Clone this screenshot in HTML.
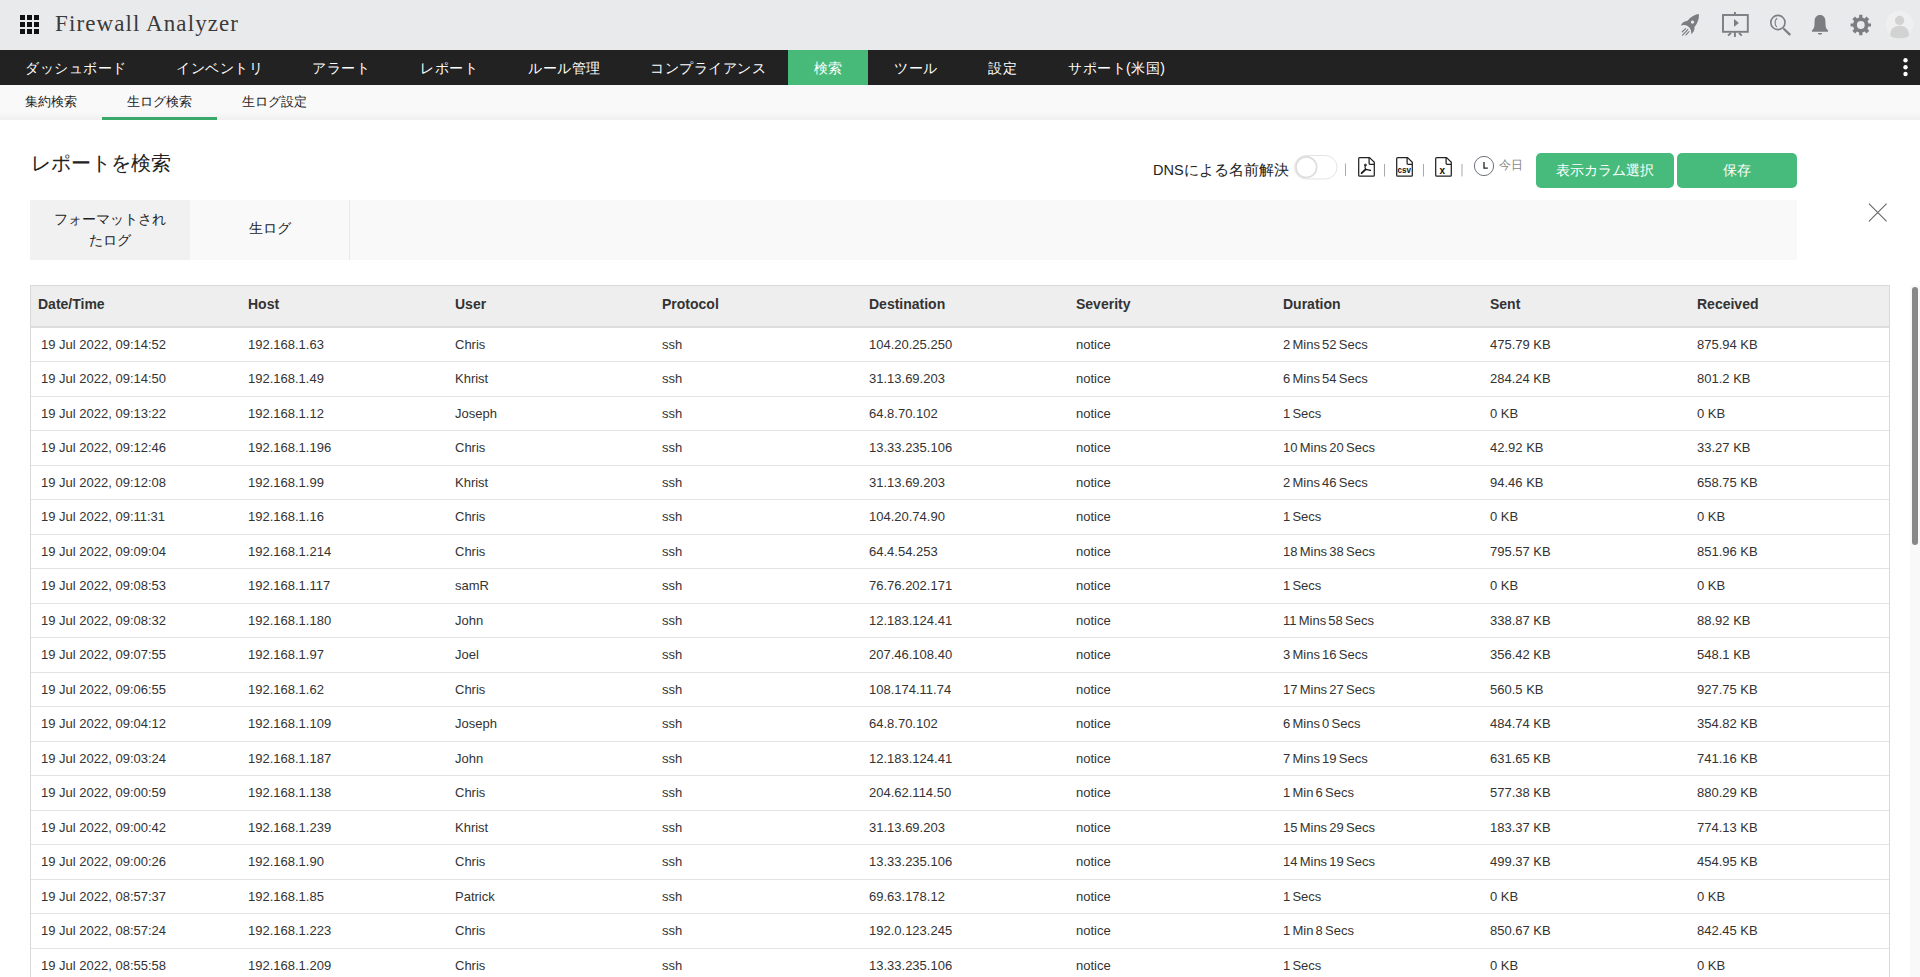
<!DOCTYPE html>
<html><head><meta charset="utf-8">
<style>
*{box-sizing:border-box;margin:0;padding:0}
html,body{width:1920px;height:977px;overflow:hidden;background:#fff;font-family:"Liberation Sans",sans-serif;color:#222}
.hdr{position:absolute;left:0;top:0;width:1920px;height:50px;background:#e9eaec}
.grid{position:absolute;left:20px;top:15px;width:19px;height:19px}
.grid i{position:absolute;width:5px;height:5px;background:#111}
.brand{position:absolute;left:55px;top:10px;font-family:"Liberation Serif",serif;font-size:23px;color:#3a3a3a;letter-spacing:1.1px;line-height:27px}
.nav{position:absolute;left:0;top:50px;width:1920px;height:35px;background:#222}
.nav span{position:absolute;top:0;height:35px;line-height:37px;overflow:hidden;color:#fff;font-size:14px;letter-spacing:0.5px;white-space:nowrap}
.nav .act{background:#47ba7a;text-align:center}
.sub{position:absolute;left:0;top:85px;width:1920px;height:35px;background:linear-gradient(to bottom,#f9f9f9 0,#f9f9f9 27px,#f0f0f0 35px)}
.sub span{position:absolute;top:0;height:35px;line-height:33px;font-size:13px;color:#222;white-space:nowrap}
.sub .uline{position:absolute;left:102px;top:32px;width:115px;height:3px;background:#3aa86b}
.title{position:absolute;left:31px;top:150px;font-size:20px;color:#222;white-space:nowrap}
.tabs{position:absolute;left:30px;top:200px;width:1767px;height:60px;background:#f9f9f9}
.tab{position:absolute;top:0;height:60px;width:160px;text-align:center;font-size:14px;color:#222;display:flex;align-items:center;justify-content:center;line-height:21px}
.close{position:absolute;left:1867px;top:202px;width:21px;height:21px}
.scroll{position:absolute;left:1910px;top:285px;width:10px;height:692px;background:#f9f9f9}
.thumb{position:absolute;left:1912px;top:287px;width:6px;height:258px;background:#888;border-radius:3px}
.tb{position:absolute}
.th{position:absolute;top:286px;height:40px;line-height:40px;font-size:14px;font-weight:bold;color:#333;white-space:nowrap;margin-top:-2px}
.td{position:absolute;height:33px;line-height:33px;font-size:13px;color:#333;white-space:nowrap;margin-top:0}
.rl{position:absolute;left:31px;width:1858px;height:1px;background:#e3e3e3}
.btn{position:absolute;top:153px;height:35px;line-height:35px;background:#47bb7c;color:#fff;border-radius:5px;font-size:14px;text-align:center;white-space:nowrap}
</style></head><body>
<div class="hdr">
  <div class="grid"><i style="left:0;top:0"></i><i style="left:7px;top:0"></i><i style="left:14px;top:0"></i><i style="left:0;top:7px"></i><i style="left:7px;top:7px"></i><i style="left:14px;top:7px"></i><i style="left:0;top:14px"></i><i style="left:7px;top:14px"></i><i style="left:14px;top:14px"></i></div>
  <div class="brand">Firewall Analyzer</div>
</div>
<div class="nav">
  <span style="left:25px">ダッシュボード</span>
  <span style="left:176px">インベントリ</span>
  <span style="left:312px">アラート</span>
  <span style="left:420px">レポート</span>
  <span style="left:528px">ルール管理</span>
  <span style="left:650px">コンプライアンス</span>
  <span class="act" style="left:788px;width:80px">検索</span>
  <span style="left:894px">ツール</span>
  <span style="left:988px">設定</span>
  <span style="left:1068px">サポート(米国)</span>
</div>
<div class="sub">
  <span style="left:25px">集約検索</span>
  <span style="left:127px">生ログ検索</span>
  <span style="left:242px">生ログ設定</span>
  <div class="uline"></div>
</div>
<div class="title">レポートを検索</div>
<div class="tabs">
  <div class="tab" style="left:0;background:#f1f1f1">フォーマットされ<br>たログ</div>
  <div class="tab" style="left:160px;border-right:1px solid #e8e8e8;padding-bottom:4px">生ログ</div>
</div>
<svg style="position:absolute;left:0;top:0" width="1920" height="260" viewBox="0 0 1920 260">
<g fill="#7a7e81">
<path d="M1698.8 13.9C1695.5 14.2 1690.5 16.5 1687.5 20.8C1685 21 1682 22.5 1680.8 25.6C1683.5 24.6 1686.5 25 1688.8 27C1690.8 29 1691.5 31.5 1691.3 34.3C1693.8 32 1695 29.5 1694.4 27C1697.5 23.5 1699.5 18 1698.8 13.9Z"/>
<circle cx="1692.5" cy="22.1" r="1.7" fill="#e9eaec"/>
</g>
<g stroke="#7a7e81" stroke-width="1.2" stroke-linecap="round" fill="none">
<path d="M1685.6 28.6L1682.3 31.8M1687.8 29.6L1682.6 35.2M1689 31.7L1685.9 34.8"/>
</g>
<g stroke="#7a7e81" fill="none" stroke-width="1.9">
<rect x="1723" y="15" width="24.8" height="16.8"/>
<path d="M1734.9 12V15M1734.9 32V36.9M1731 33L1728 35.6M1739 33L1741.8 35.6"/>
</g>
<path d="M1734 19.1L1734 26.8L1738.9 22.9Z" fill="#7a7e81"/>
<g stroke="#7a7e81" fill="none">
<circle cx="1777.9" cy="22.5" r="7.1" stroke-width="1.6"/>
<path d="M1784 29L1789.6 34.4" stroke-width="2.2" stroke-linecap="round"/>
<path d="M1777.2 18.2C1774.6 19.8 1774.3 24.6 1776.8 27.2" stroke-width="1.1"/>
</g>
<path fill="#7a7e81" d="M1820 15C1823.3 15 1825.3 17.5 1825.4 21L1825.6 25.8C1825.8 28 1826.8 29.5 1828 30.3V31.8H1812V30.3C1813.2 29.5 1814.2 28 1814.4 25.8L1814.6 21C1814.7 17.5 1816.7 15 1820 15ZM1817.8 33.1A2.2 1.6 0 0 0 1822.2 33.1Z"/>
<g transform="translate(1860.8 25)" fill="#7a7e81">
<path d="M-1.6 -10.2H1.6V-7.6A7.6 7.6 0 0 1 3.9 -6.6L5.7 -8.5L8.5 -5.7L6.6 -3.9A7.6 7.6 0 0 1 7.6 -1.6H10.2V1.6H7.6A7.6 7.6 0 0 1 6.6 3.9L8.5 5.7L5.7 8.5L3.9 6.6A7.6 7.6 0 0 1 1.6 7.6V10.2H-1.6V7.6A7.6 7.6 0 0 1 -3.9 6.6L-5.7 8.5L-8.5 5.7L-6.6 3.9A7.6 7.6 0 0 1 -7.6 1.6H-10.2V-1.6H-7.6A7.6 7.6 0 0 1 -6.6 -3.9L-8.5 -5.7L-5.7 -8.5L-3.9 -6.6A7.6 7.6 0 0 1 -1.6 -7.6ZM0 -3.9A3.9 3.9 0 1 0 0 3.9A3.9 3.9 0 1 0 0 -3.9Z" fill-rule="evenodd"/>
</g>
<circle cx="1899.6" cy="24.6" r="13.8" fill="#efefef"/>
<circle cx="1899.6" cy="20.4" r="4.6" fill="#d2d2d2"/>
<path d="M1890.2 34.5C1890.2 29 1894.5 25.8 1899.6 25.8C1904.7 25.8 1909 29 1909 34.5C1909 37 1905 38.3 1899.6 38.3C1894.2 38.3 1890.2 37 1890.2 34.5Z" fill="#d2d2d2"/>
<g fill="#fff"><circle cx="1905.5" cy="60.2" r="2.2"/><circle cx="1905.5" cy="67.2" r="2.2"/><circle cx="1905.5" cy="74" r="2.2"/></g>
<g stroke="#222" stroke-width="1.25" fill="none" stroke-linejoin="round">
<path d="M1358.7 158.6Q1358.7 157.6 1359.7 157.6L1369.6 157.6L1374.3 162.3L1374.3 175.2Q1374.3 176.2 1373.3 176.2L1359.7 176.2Q1358.7 176.2 1358.7 175.2Z"/>
<path d="M1369.1 157.6V163.3Q1369.1 164.3 1370.1 164.3H1374.3"/>
<path d="M1396.7 158.6Q1396.7 157.6 1397.7 157.6L1407.6 157.6L1412.3 162.3L1412.3 175.2Q1412.3 176.2 1411.3 176.2L1397.7 176.2Q1396.7 176.2 1396.7 175.2Z"/>
<path d="M1407.1 157.6V163.3Q1407.1 164.3 1408.1 164.3H1412.3"/>
<path d="M1435.7 158.6Q1435.7 157.6 1436.7 157.6L1446.6 157.6L1451.3 162.3L1451.3 175.2Q1451.3 176.2 1450.3 176.2L1436.7 176.2Q1435.7 176.2 1435.7 175.2Z"/>
<path d="M1446.1 157.6V163.3Q1446.1 164.3 1447.1 164.3H1451.3"/>
</g>
<g stroke="#111" fill="none" stroke-linecap="round">
<path d="M1365.3 165.5C1364.6 167 1365.2 168.5 1365.6 169.4" stroke-width="1.1"/>
<circle cx="1365.3" cy="165" r="0.9" stroke-width="0.9"/>
<path d="M1365.6 169.4L1361.6 173.2" stroke-width="1.8"/>
<path d="M1365.6 169.4L1370.5 170.4" stroke-width="1.3"/>
</g>
<text x="1397.6" y="173.2" font-family="Liberation Sans" font-weight="bold" font-size="9.5" fill="#111" textLength="13.4" lengthAdjust="spacingAndGlyphs">csv</text>
<text x="1439.6" y="173.7" font-family="Liberation Sans" font-weight="bold" font-size="10" fill="#111">x</text>
<g fill="#aaa"><rect x="1345" y="163.5" width="1" height="12.5"/><rect x="1384" y="164" width="1" height="12.5"/><rect x="1423" y="164" width="1" height="12.5"/><rect x="1461.5" y="164" width="1" height="12.5"/></g>
<circle cx="1484" cy="166" r="9.6" stroke="#6c737a" stroke-width="1" fill="none"/>
<path d="M1484 162V168.2H1487.8" stroke="#222" stroke-width="1.3" fill="none"/>
<rect x="1294.5" y="155.5" width="42.5" height="23.5" rx="11.75" fill="#fff" stroke="#e3e3e3"/>
<circle cx="1306.3" cy="167.2" r="10.3" fill="#fff" stroke="#dcdcdc" stroke-width="1.6"/>
<path d="M1868.9 203.6L1886.6 221.3M1886.6 203.6L1868.9 221.3" stroke="#666" stroke-width="1.1" fill="none"/>
</svg>
<div style="position:absolute;left:1153px;top:160px;font-size:14.5px;color:#222;white-space:nowrap;line-height:20px">DNSによる名前解決</div>
<div style="position:absolute;left:1499px;top:157px;font-size:12px;color:#888;white-space:nowrap;line-height:16px">今日</div>
<div class="btn" style="left:1536px;width:138px">表示カラム選択</div>
<div class="btn" style="left:1677px;width:120px">保存</div>

<div class="tb" style="left:30px;top:285px;width:1860px;height:692px;border:1px solid #d9d9d9;border-bottom:none"></div>
<div style="position:absolute;left:31px;top:286px;width:1858px;height:40px;background:#eee"></div>
<div style="position:absolute;left:31px;top:326px;width:1858px;height:2px;background:#ddd"></div>
<div class="th" style="left:38px">Date/Time</div>
<div class="th" style="left:248px">Host</div>
<div class="th" style="left:455px">User</div>
<div class="th" style="left:662px">Protocol</div>
<div class="th" style="left:869px">Destination</div>
<div class="th" style="left:1076px">Severity</div>
<div class="th" style="left:1283px">Duration</div>
<div class="th" style="left:1490px">Sent</div>
<div class="th" style="left:1697px">Received</div>
<div class="rl" style="top:361px"></div>
<div class="td" style="left:41px;top:328px">19 Jul 2022, 09:14:52</div>
<div class="td" style="left:248px;top:328px">192.168.1.63</div>
<div class="td" style="left:455px;top:328px">Chris</div>
<div class="td" style="left:662px;top:328px">ssh</div>
<div class="td" style="left:869px;top:328px">104.20.25.250</div>
<div class="td" style="left:1076px;top:328px">notice</div>
<div class="td" style="word-spacing:-1.4px;left:1283px;top:328px">2 Mins 52 Secs</div>
<div class="td" style="left:1490px;top:328px">475.79 KB</div>
<div class="td" style="left:1697px;top:328px">875.94 KB</div>
<div class="rl" style="top:396px"></div>
<div class="td" style="left:41px;top:362px">19 Jul 2022, 09:14:50</div>
<div class="td" style="left:248px;top:362px">192.168.1.49</div>
<div class="td" style="left:455px;top:362px">Khrist</div>
<div class="td" style="left:662px;top:362px">ssh</div>
<div class="td" style="left:869px;top:362px">31.13.69.203</div>
<div class="td" style="left:1076px;top:362px">notice</div>
<div class="td" style="word-spacing:-1.4px;left:1283px;top:362px">6 Mins 54 Secs</div>
<div class="td" style="left:1490px;top:362px">284.24 KB</div>
<div class="td" style="left:1697px;top:362px">801.2 KB</div>
<div class="rl" style="top:430px"></div>
<div class="td" style="left:41px;top:397px">19 Jul 2022, 09:13:22</div>
<div class="td" style="left:248px;top:397px">192.168.1.12</div>
<div class="td" style="left:455px;top:397px">Joseph</div>
<div class="td" style="left:662px;top:397px">ssh</div>
<div class="td" style="left:869px;top:397px">64.8.70.102</div>
<div class="td" style="left:1076px;top:397px">notice</div>
<div class="td" style="word-spacing:-1.4px;left:1283px;top:397px">1 Secs</div>
<div class="td" style="left:1490px;top:397px">0 KB</div>
<div class="td" style="left:1697px;top:397px">0 KB</div>
<div class="rl" style="top:465px"></div>
<div class="td" style="left:41px;top:431px">19 Jul 2022, 09:12:46</div>
<div class="td" style="left:248px;top:431px">192.168.1.196</div>
<div class="td" style="left:455px;top:431px">Chris</div>
<div class="td" style="left:662px;top:431px">ssh</div>
<div class="td" style="left:869px;top:431px">13.33.235.106</div>
<div class="td" style="left:1076px;top:431px">notice</div>
<div class="td" style="word-spacing:-1.4px;left:1283px;top:431px">10 Mins 20 Secs</div>
<div class="td" style="left:1490px;top:431px">42.92 KB</div>
<div class="td" style="left:1697px;top:431px">33.27 KB</div>
<div class="rl" style="top:499px"></div>
<div class="td" style="left:41px;top:466px">19 Jul 2022, 09:12:08</div>
<div class="td" style="left:248px;top:466px">192.168.1.99</div>
<div class="td" style="left:455px;top:466px">Khrist</div>
<div class="td" style="left:662px;top:466px">ssh</div>
<div class="td" style="left:869px;top:466px">31.13.69.203</div>
<div class="td" style="left:1076px;top:466px">notice</div>
<div class="td" style="word-spacing:-1.4px;left:1283px;top:466px">2 Mins 46 Secs</div>
<div class="td" style="left:1490px;top:466px">94.46 KB</div>
<div class="td" style="left:1697px;top:466px">658.75 KB</div>
<div class="rl" style="top:534px"></div>
<div class="td" style="left:41px;top:500px">19 Jul 2022, 09:11:31</div>
<div class="td" style="left:248px;top:500px">192.168.1.16</div>
<div class="td" style="left:455px;top:500px">Chris</div>
<div class="td" style="left:662px;top:500px">ssh</div>
<div class="td" style="left:869px;top:500px">104.20.74.90</div>
<div class="td" style="left:1076px;top:500px">notice</div>
<div class="td" style="word-spacing:-1.4px;left:1283px;top:500px">1 Secs</div>
<div class="td" style="left:1490px;top:500px">0 KB</div>
<div class="td" style="left:1697px;top:500px">0 KB</div>
<div class="rl" style="top:568px"></div>
<div class="td" style="left:41px;top:535px">19 Jul 2022, 09:09:04</div>
<div class="td" style="left:248px;top:535px">192.168.1.214</div>
<div class="td" style="left:455px;top:535px">Chris</div>
<div class="td" style="left:662px;top:535px">ssh</div>
<div class="td" style="left:869px;top:535px">64.4.54.253</div>
<div class="td" style="left:1076px;top:535px">notice</div>
<div class="td" style="word-spacing:-1.4px;left:1283px;top:535px">18 Mins 38 Secs</div>
<div class="td" style="left:1490px;top:535px">795.57 KB</div>
<div class="td" style="left:1697px;top:535px">851.96 KB</div>
<div class="rl" style="top:603px"></div>
<div class="td" style="left:41px;top:569px">19 Jul 2022, 09:08:53</div>
<div class="td" style="left:248px;top:569px">192.168.1.117</div>
<div class="td" style="left:455px;top:569px">samR</div>
<div class="td" style="left:662px;top:569px">ssh</div>
<div class="td" style="left:869px;top:569px">76.76.202.171</div>
<div class="td" style="left:1076px;top:569px">notice</div>
<div class="td" style="word-spacing:-1.4px;left:1283px;top:569px">1 Secs</div>
<div class="td" style="left:1490px;top:569px">0 KB</div>
<div class="td" style="left:1697px;top:569px">0 KB</div>
<div class="rl" style="top:637px"></div>
<div class="td" style="left:41px;top:604px">19 Jul 2022, 09:08:32</div>
<div class="td" style="left:248px;top:604px">192.168.1.180</div>
<div class="td" style="left:455px;top:604px">John</div>
<div class="td" style="left:662px;top:604px">ssh</div>
<div class="td" style="left:869px;top:604px">12.183.124.41</div>
<div class="td" style="left:1076px;top:604px">notice</div>
<div class="td" style="word-spacing:-1.4px;left:1283px;top:604px">11 Mins 58 Secs</div>
<div class="td" style="left:1490px;top:604px">338.87 KB</div>
<div class="td" style="left:1697px;top:604px">88.92 KB</div>
<div class="rl" style="top:672px"></div>
<div class="td" style="left:41px;top:638px">19 Jul 2022, 09:07:55</div>
<div class="td" style="left:248px;top:638px">192.168.1.97</div>
<div class="td" style="left:455px;top:638px">Joel</div>
<div class="td" style="left:662px;top:638px">ssh</div>
<div class="td" style="left:869px;top:638px">207.46.108.40</div>
<div class="td" style="left:1076px;top:638px">notice</div>
<div class="td" style="word-spacing:-1.4px;left:1283px;top:638px">3 Mins 16 Secs</div>
<div class="td" style="left:1490px;top:638px">356.42 KB</div>
<div class="td" style="left:1697px;top:638px">548.1 KB</div>
<div class="rl" style="top:706px"></div>
<div class="td" style="left:41px;top:673px">19 Jul 2022, 09:06:55</div>
<div class="td" style="left:248px;top:673px">192.168.1.62</div>
<div class="td" style="left:455px;top:673px">Chris</div>
<div class="td" style="left:662px;top:673px">ssh</div>
<div class="td" style="left:869px;top:673px">108.174.11.74</div>
<div class="td" style="left:1076px;top:673px">notice</div>
<div class="td" style="word-spacing:-1.4px;left:1283px;top:673px">17 Mins 27 Secs</div>
<div class="td" style="left:1490px;top:673px">560.5 KB</div>
<div class="td" style="left:1697px;top:673px">927.75 KB</div>
<div class="rl" style="top:741px"></div>
<div class="td" style="left:41px;top:707px">19 Jul 2022, 09:04:12</div>
<div class="td" style="left:248px;top:707px">192.168.1.109</div>
<div class="td" style="left:455px;top:707px">Joseph</div>
<div class="td" style="left:662px;top:707px">ssh</div>
<div class="td" style="left:869px;top:707px">64.8.70.102</div>
<div class="td" style="left:1076px;top:707px">notice</div>
<div class="td" style="word-spacing:-1.4px;left:1283px;top:707px">6 Mins 0 Secs</div>
<div class="td" style="left:1490px;top:707px">484.74 KB</div>
<div class="td" style="left:1697px;top:707px">354.82 KB</div>
<div class="rl" style="top:775px"></div>
<div class="td" style="left:41px;top:742px">19 Jul 2022, 09:03:24</div>
<div class="td" style="left:248px;top:742px">192.168.1.187</div>
<div class="td" style="left:455px;top:742px">John</div>
<div class="td" style="left:662px;top:742px">ssh</div>
<div class="td" style="left:869px;top:742px">12.183.124.41</div>
<div class="td" style="left:1076px;top:742px">notice</div>
<div class="td" style="word-spacing:-1.4px;left:1283px;top:742px">7 Mins 19 Secs</div>
<div class="td" style="left:1490px;top:742px">631.65 KB</div>
<div class="td" style="left:1697px;top:742px">741.16 KB</div>
<div class="rl" style="top:810px"></div>
<div class="td" style="left:41px;top:776px">19 Jul 2022, 09:00:59</div>
<div class="td" style="left:248px;top:776px">192.168.1.138</div>
<div class="td" style="left:455px;top:776px">Chris</div>
<div class="td" style="left:662px;top:776px">ssh</div>
<div class="td" style="left:869px;top:776px">204.62.114.50</div>
<div class="td" style="left:1076px;top:776px">notice</div>
<div class="td" style="word-spacing:-1.4px;left:1283px;top:776px">1 Min 6 Secs</div>
<div class="td" style="left:1490px;top:776px">577.38 KB</div>
<div class="td" style="left:1697px;top:776px">880.29 KB</div>
<div class="rl" style="top:844px"></div>
<div class="td" style="left:41px;top:811px">19 Jul 2022, 09:00:42</div>
<div class="td" style="left:248px;top:811px">192.168.1.239</div>
<div class="td" style="left:455px;top:811px">Khrist</div>
<div class="td" style="left:662px;top:811px">ssh</div>
<div class="td" style="left:869px;top:811px">31.13.69.203</div>
<div class="td" style="left:1076px;top:811px">notice</div>
<div class="td" style="word-spacing:-1.4px;left:1283px;top:811px">15 Mins 29 Secs</div>
<div class="td" style="left:1490px;top:811px">183.37 KB</div>
<div class="td" style="left:1697px;top:811px">774.13 KB</div>
<div class="rl" style="top:879px"></div>
<div class="td" style="left:41px;top:845px">19 Jul 2022, 09:00:26</div>
<div class="td" style="left:248px;top:845px">192.168.1.90</div>
<div class="td" style="left:455px;top:845px">Chris</div>
<div class="td" style="left:662px;top:845px">ssh</div>
<div class="td" style="left:869px;top:845px">13.33.235.106</div>
<div class="td" style="left:1076px;top:845px">notice</div>
<div class="td" style="word-spacing:-1.4px;left:1283px;top:845px">14 Mins 19 Secs</div>
<div class="td" style="left:1490px;top:845px">499.37 KB</div>
<div class="td" style="left:1697px;top:845px">454.95 KB</div>
<div class="rl" style="top:913px"></div>
<div class="td" style="left:41px;top:880px">19 Jul 2022, 08:57:37</div>
<div class="td" style="left:248px;top:880px">192.168.1.85</div>
<div class="td" style="left:455px;top:880px">Patrick</div>
<div class="td" style="left:662px;top:880px">ssh</div>
<div class="td" style="left:869px;top:880px">69.63.178.12</div>
<div class="td" style="left:1076px;top:880px">notice</div>
<div class="td" style="word-spacing:-1.4px;left:1283px;top:880px">1 Secs</div>
<div class="td" style="left:1490px;top:880px">0 KB</div>
<div class="td" style="left:1697px;top:880px">0 KB</div>
<div class="rl" style="top:948px"></div>
<div class="td" style="left:41px;top:914px">19 Jul 2022, 08:57:24</div>
<div class="td" style="left:248px;top:914px">192.168.1.223</div>
<div class="td" style="left:455px;top:914px">Chris</div>
<div class="td" style="left:662px;top:914px">ssh</div>
<div class="td" style="left:869px;top:914px">192.0.123.245</div>
<div class="td" style="left:1076px;top:914px">notice</div>
<div class="td" style="word-spacing:-1.4px;left:1283px;top:914px">1 Min 8 Secs</div>
<div class="td" style="left:1490px;top:914px">850.67 KB</div>
<div class="td" style="left:1697px;top:914px">842.45 KB</div>
<div class="rl" style="top:982px"></div>
<div class="td" style="left:41px;top:949px">19 Jul 2022, 08:55:58</div>
<div class="td" style="left:248px;top:949px">192.168.1.209</div>
<div class="td" style="left:455px;top:949px">Chris</div>
<div class="td" style="left:662px;top:949px">ssh</div>
<div class="td" style="left:869px;top:949px">13.33.235.106</div>
<div class="td" style="left:1076px;top:949px">notice</div>
<div class="td" style="word-spacing:-1.4px;left:1283px;top:949px">1 Secs</div>
<div class="td" style="left:1490px;top:949px">0 KB</div>
<div class="td" style="left:1697px;top:949px">0 KB</div>
<div class="scroll"></div><div class="thumb"></div>
</body></html>
